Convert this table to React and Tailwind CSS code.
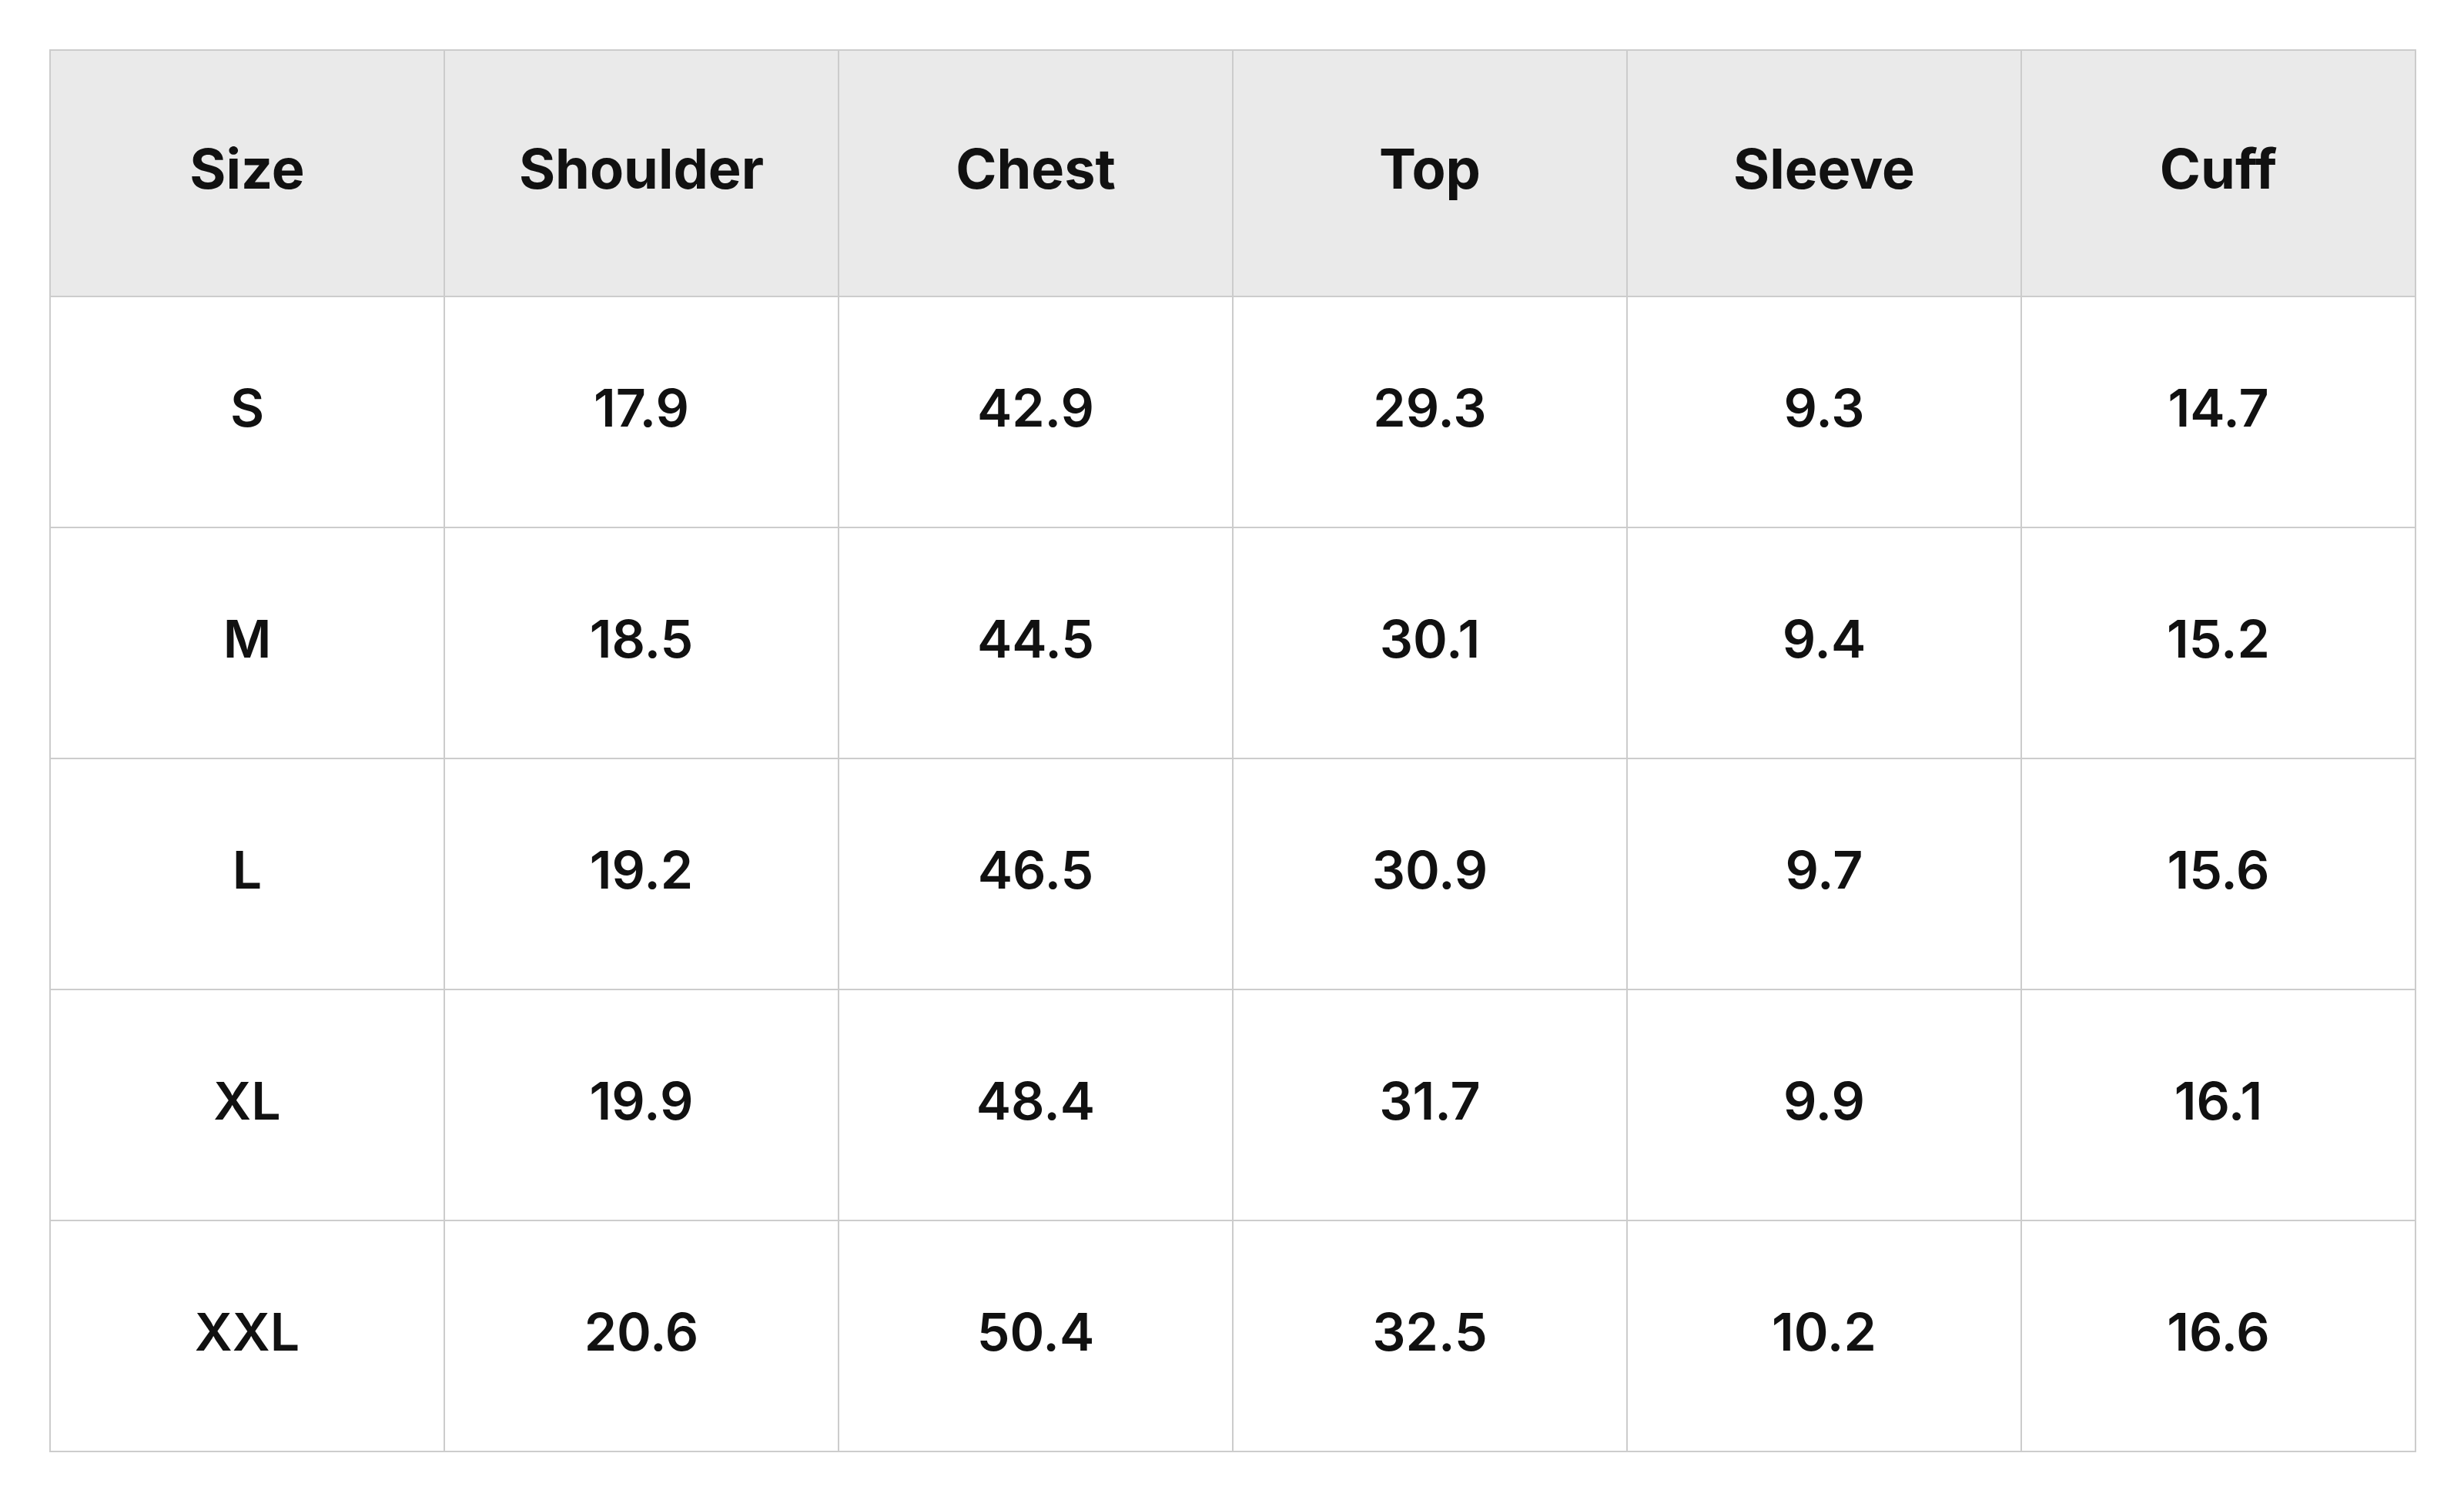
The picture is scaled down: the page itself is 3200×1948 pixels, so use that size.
import React from 'react';

const headers = ['Size', 'Shoulder', 'Chest', 'Top', 'Sleeve', 'Cuff'];

const rows = [
  ['S', '17.9', '42.9', '29.3', '9.3', '14.7'],
  ['M', '18.5', '44.5', '30.1', '9.4', '15.2'],
  ['L', '19.2', '46.5', '30.9', '9.7', '15.6'],
  ['XL', '19.9', '48.4', '31.7', '9.9', '16.1'],
  ['XXL', '20.6', '50.4', '32.5', '10.2', '16.6'],
];

export default function App() {
  return (
    <div className="min-h-screen bg-white pt-[64px] pl-[64px] font-['Inter','Liberation_Sans',sans-serif] text-[#111111]">
      <table className="w-[3074px] table-fixed border-collapse border-2 border-[#cccccc]">
        <thead>
          <tr className="bg-[#eaeaea]">
            {headers.map((h) => (
              <th
                key={h}
                className="h-[320px] border-2 border-[#cccccc] pb-[12px] text-center text-[72px] font-bold"
              >
                {h}
              </th>
            ))}
          </tr>
        </thead>
        <tbody>
          {rows.map((row) => (
            <tr key={row[0]}>
              {row.map((cell, i) => (
                <td
                  key={i}
                  className="h-[300px] border-2 border-[#cccccc] pb-[12px] text-center text-[68px] font-semibold"
                >
                  {cell}
                </td>
              ))}
            </tr>
          ))}
        </tbody>
      </table>
    </div>
  );
}
